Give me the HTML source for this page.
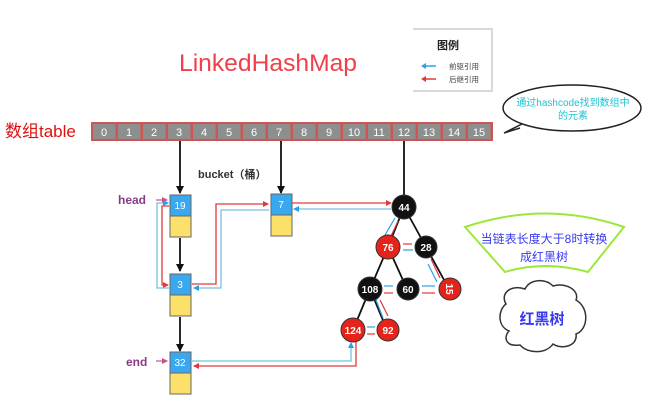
<!DOCTYPE html>
<html><head><meta charset="utf-8"><style>
html,body{margin:0;padding:0;background:#fff;width:651px;height:405px;overflow:hidden}
svg{display:block}
text{font-family:"Liberation Sans","Noto Sans CJK SC",sans-serif}
</style></head><body>
<svg width="651" height="405" viewBox="0 0 651 405" xmlns="http://www.w3.org/2000/svg">
<defs>
<marker id="ab" markerWidth="8" markerHeight="8" refX="7" refY="4" orient="auto" markerUnits="userSpaceOnUse"><path d="M0,0 L8,4 L0,8 z" fill="#111"/></marker>
<marker id="ar" markerWidth="6" markerHeight="6" refX="5" refY="3" orient="auto" markerUnits="userSpaceOnUse"><path d="M0,0 L6,3 L0,6 z" fill="#e0393b"/></marker>
<marker id="au" markerWidth="6" markerHeight="6" refX="5" refY="3" orient="auto" markerUnits="userSpaceOnUse"><path d="M0,0 L6,3 L0,6 z" fill="#2aa0e6"/></marker>
<marker id="ap" markerWidth="6" markerHeight="6" refX="5" refY="3" orient="auto" markerUnits="userSpaceOnUse"><path d="M0,0 L6,3 L0,6 z" fill="#c8508a"/></marker>
</defs>

<text x="179" y="71" font-size="24" fill="#f0404a" textLength="178" lengthAdjust="spacingAndGlyphs">LinkedHashMap</text>

<!-- legend -->
<path d="M413,29 L492,29 L492,91 L413,91" fill="#fff" stroke="#ccc" stroke-width="1.5"/>
<text x="437" y="49" font-size="11" font-weight="bold" fill="#222">图例</text>
<line x1="424" y1="66" x2="436" y2="66" stroke="#2aa0e6" stroke-width="1.5"/>
<path d="M421,66 l5,-3 v6z" fill="#2aa0e6"/>
<text x="449" y="69" font-size="7.5" fill="#444">前驱引用</text>
<line x1="424" y1="79" x2="436" y2="79" stroke="#e0393b" stroke-width="1.5"/>
<path d="M421,79 l5,-3 v6z" fill="#e0393b"/>
<text x="449" y="82" font-size="7.5" fill="#444">后继引用</text>

<!-- speech bubble -->
<ellipse cx="572" cy="108" rx="69" ry="23" fill="#fff" stroke="#222" stroke-width="1.5"/>
<path d="M522,124 L504,133 L520,128" fill="#fff" stroke="#222" stroke-width="1.5"/>
<text x="573" y="106" font-size="10" fill="#1fc3d3" text-anchor="middle">通过hashcode找到数组中</text>
<text x="573" y="119" font-size="10" fill="#1fc3d3" text-anchor="middle">的元素</text>

<!-- table -->
<text x="5" y="137" font-size="17" fill="#e01010">数组table</text>
<rect x="91" y="122" width="402" height="19" fill="#c55" />
<g fill="#8e8e8e">
<rect x="93" y="124" width="22.5" height="15"/><rect x="118" y="124" width="22.5" height="15"/><rect x="143" y="124" width="22.5" height="15"/><rect x="168" y="124" width="22.5" height="15"/><rect x="193" y="124" width="22.5" height="15"/><rect x="218" y="124" width="22.5" height="15"/><rect x="243" y="124" width="22.5" height="15"/><rect x="268" y="124" width="22.5" height="15"/><rect x="293" y="124" width="22.5" height="15"/><rect x="318" y="124" width="22.5" height="15"/><rect x="343" y="124" width="22.5" height="15"/><rect x="368" y="124" width="22.5" height="15"/><rect x="393" y="124" width="22.5" height="15"/><rect x="418" y="124" width="22.5" height="15"/><rect x="443" y="124" width="22.5" height="15"/><rect x="468" y="124" width="22.5" height="15"/>
</g>
<g font-size="11" fill="#fff" text-anchor="middle">
<text x="104" y="136">0</text><text x="129" y="136">1</text><text x="154" y="136">2</text><text x="179" y="136">3</text><text x="204" y="136">4</text><text x="229" y="136">5</text><text x="254" y="136">6</text><text x="279" y="136">7</text><text x="304" y="136">8</text><text x="329" y="136">9</text><text x="354" y="136">10</text><text x="379" y="136">11</text><text x="404" y="136">12</text><text x="429" y="136">13</text><text x="454" y="136">14</text><text x="479" y="136">15</text>
</g>

<!-- black vertical arrows -->
<g stroke="#111" stroke-width="1.8">
<line x1="180" y1="141" x2="180" y2="193" marker-end="url(#ab)"/>
<line x1="281" y1="141" x2="281" y2="193" marker-end="url(#ab)"/>
<line x1="404" y1="141" x2="404" y2="197"/>
<line x1="180" y1="238" x2="180" y2="271" marker-end="url(#ab)"/>
<line x1="180" y1="317" x2="180" y2="351" marker-end="url(#ab)"/>
</g>
<text x="198" y="178" font-size="11" font-weight="bold" fill="#333">bucket（桶）</text>
<text x="118" y="204" font-size="12" font-weight="bold" fill="#8a3a8a">head</text>
<text x="126" y="366" font-size="12" font-weight="bold" fill="#8a3a8a">end</text>
<line x1="156" y1="200" x2="167" y2="200" stroke="#c8508a" stroke-width="1.2" marker-end="url(#ap)"/>
<line x1="156" y1="361" x2="167" y2="361" stroke="#c8508a" stroke-width="1.2" marker-end="url(#ap)"/>

<!-- links -->
<g fill="none" stroke-width="1.3">
<path d="M169,206 H162 V285 H168" stroke="#e0393b" marker-end="url(#ar)"/>
<path d="M169,288 H157 V203 H168" stroke="#75c0e0" marker-end="url(#au)"/>
<path d="M192,284 H216 V204 H268" stroke="#e0393b" marker-end="url(#ar)"/>
<path d="M269,210 H221 V288 H194" stroke="#75c0e0" marker-end="url(#au)"/>
<path d="M292,203 H391" stroke="#e0393b" marker-end="url(#ar)"/>
<path d="M391,209 H294" stroke="#75c0e0" marker-end="url(#au)"/>
<path d="M192,361 H351 V343" stroke="#75c0e0" marker-end="url(#au)"/>
<path d="M356,341 V366 H194" stroke="#e0393b" marker-end="url(#ar)"/>
</g>

<!-- boxes -->
<g stroke="#666" stroke-width="1">
<rect x="170" y="195" width="21" height="21" fill="#3aa8ee"/><rect x="170" y="216" width="21" height="21" fill="#fbe16a"/>
<rect x="271" y="194" width="21" height="21" fill="#3aa8ee"/><rect x="271" y="215" width="21" height="21" fill="#fbe16a"/>
<rect x="170" y="274" width="21" height="21" fill="#3aa8ee"/><rect x="170" y="295" width="21" height="21" fill="#fbe16a"/>
<rect x="170" y="352" width="21" height="21" fill="#3aa8ee"/><rect x="170" y="373" width="21" height="21" fill="#fbe16a"/>
</g>
<g font-size="10" fill="#fff" text-anchor="middle">
<text x="180" y="209">19</text><text x="281" y="208">7</text><text x="180" y="288">3</text><text x="180" y="366">32</text>
</g>

<!-- tree edges -->
<g stroke="#111" stroke-width="1.8">
<line x1="404" y1="207" x2="388" y2="247"/><line x1="404" y1="207" x2="426" y2="247"/>
<line x1="388" y1="247" x2="370" y2="289"/><line x1="388" y1="247" x2="407" y2="289"/>
<line x1="426" y1="247" x2="449" y2="289"/>
<line x1="370" y1="289" x2="353" y2="330"/><line x1="370" y1="289" x2="387" y2="330"/>
</g>
<g stroke-width="1.2">
<line x1="385" y1="235" x2="395" y2="218" stroke="#2aa0e6"/><line x1="398" y1="221" x2="391" y2="236" stroke="#e0393b"/>
<line x1="403" y1="244" x2="412" y2="244" stroke="#e0393b"/><line x1="413" y1="250" x2="403" y2="250" stroke="#2aa0e6"/>
<line x1="431" y1="259" x2="440" y2="278" stroke="#e0393b"/><line x1="437" y1="282" x2="428" y2="264" stroke="#2aa0e6"/>
<line x1="384" y1="286" x2="393" y2="286" stroke="#2aa0e6"/><line x1="393" y1="293" x2="384" y2="293" stroke="#e0393b"/>
<line x1="422" y1="286" x2="435" y2="286" stroke="#2aa0e6"/><line x1="435" y1="293" x2="422" y2="293" stroke="#e0393b"/>
<line x1="376" y1="300" x2="383" y2="318" stroke="#2aa0e6"/><line x1="380" y1="300" x2="388" y2="316" stroke="#e0393b"/>
<line x1="367" y1="327" x2="375" y2="327" stroke="#2aa0e6"/><line x1="375" y1="334" x2="367" y2="334" stroke="#e0393b"/>
</g>
<!-- circles -->
<g stroke="#333" stroke-width="1">
<circle cx="404" cy="207" r="12" fill="#111"/>
<circle cx="388" cy="247" r="12" fill="#e5231b"/>
<circle cx="426" cy="247" r="11" fill="#111"/>
<circle cx="370" cy="289" r="12" fill="#111"/>
<circle cx="408" cy="289" r="11" fill="#111"/>
<circle cx="450" cy="289" r="11" fill="#e5231b"/>
<circle cx="353" cy="330" r="12" fill="#e5231b"/>
<circle cx="388" cy="330" r="11" fill="#e5231b"/>
</g>
<g font-size="10" fill="#fff" text-anchor="middle" font-weight="bold">
<text x="404" y="211">44</text><text x="388" y="251">76</text><text x="426" y="251">28</text><text x="370" y="293">108</text><text x="408" y="293">60</text><text x="450" y="293" transform="rotate(90 450 289)">15</text><text x="353" y="334">124</text><text x="388" y="334">92</text>
</g>

<!-- green fan -->
<path d="M465,227 Q545,200 624,227 L588,272 Q545,260 505,272 Z" fill="#fff" stroke="#9be83a" stroke-width="2"/>
<text x="544" y="243" font-size="12" fill="#3a3af0" text-anchor="middle">当链表长度大于8时转换</text>
<text x="544" y="261" font-size="12" fill="#3a3af0" text-anchor="middle">成红黑树</text>

<!-- cloud -->
<path d="M520,345 C504,347 504,336 509,331 C497,326 498,310 506,304 C500,294 510,284 525,289 C530,279 545,278 553,286 C565,282 580,290 576,300 C590,308 588,330 576,334 C578,346 562,350 553,344 C546,354 528,354 520,345 Z" fill="#fff" stroke="#333" stroke-width="1.5"/>
<text x="542" y="324" font-size="15" font-weight="bold" fill="#3a3af0" text-anchor="middle">红黑树</text>
</svg>
</body></html>
